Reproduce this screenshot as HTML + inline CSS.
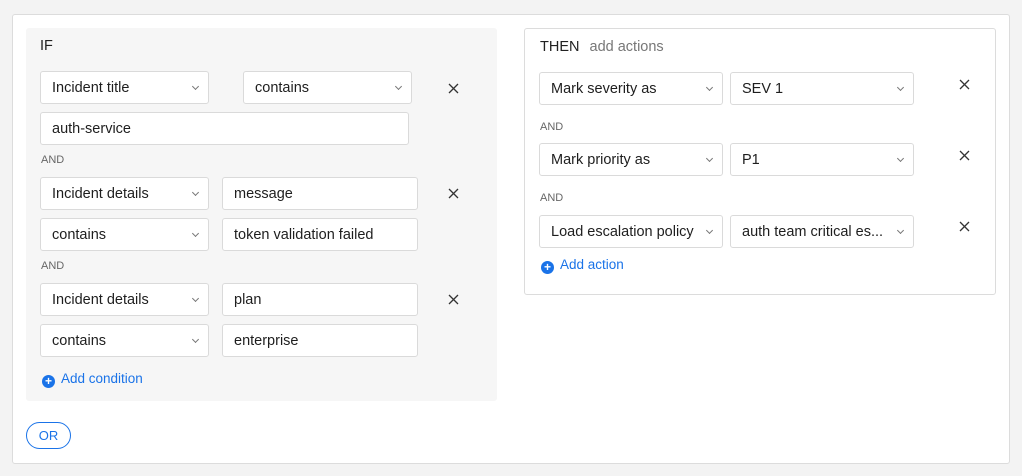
<!DOCTYPE html>
<html><head><style>
*{box-sizing:border-box;margin:0;padding:0}
body{width:1022px;height:476px;background:#f3f3f3;font-family:"Liberation Sans",sans-serif;color:#222;position:relative;overflow:hidden;font-size:14px}
.a{position:absolute}
.card{left:12px;top:14px;width:998px;height:450px;background:#fff;border:1px solid #dcdcdc;border-radius:3px}
.if{left:26px;top:28px;width:471px;height:373px;background:#f6f6f6;border-radius:3px}
.then{left:524px;top:28px;width:472px;height:267px;background:#fff;border:1px solid #dcdcdc;border-radius:3px}
.f{position:absolute;background:#fff;border:1px solid #dadada;border-radius:3px;height:33px;line-height:33px;padding-left:11px;font-size:14.5px;white-space:nowrap;overflow:hidden;color:#1e1e1e}
.s::after{content:"";position:absolute;right:10px;top:12px;width:4px;height:4px;border-right:1px solid #777;border-bottom:1px solid #777;transform:rotate(45deg)}
.and{font-size:11px;color:#666}
.x{width:11px;height:11px}
.add{color:#1a73e8;font-size:13.5px}
.pl{display:inline-block;width:13px;height:13px;border-radius:50%;background:#1a73e8;color:#fff;font-size:12px;line-height:13px;text-align:center;font-weight:bold;vertical-align:-2px;margin-right:6px}
</style></head><body>
<svg width="0" height="0" style="position:absolute"><defs><symbol id="x" viewBox="0 0 11 11"><path d="M1 1L10 10M10 1L1 10" stroke="#333" stroke-width="1.3" fill="none"/></symbol></defs></svg>
<div class="a card"></div>
<div class="a if"></div>
<div class="a then"></div>
<div class="a" style="left:40px;top:38px;font-size:14.5px">IF</div>
<div class="f s" style="left:40px;top:71px;width:169px">Incident title</div>
<div class="f s" style="left:243px;top:71px;width:169px">contains</div>
<svg class="a x" style="left:448px;top:83px"><use href="#x"/></svg>
<div class="f" style="left:40px;top:112px;width:369px">auth-service</div>
<div class="a and" style="left:41px;top:154px">AND</div>
<div class="f s" style="left:40px;top:177px;width:169px">Incident details</div>
<div class="f" style="left:222px;top:177px;width:196px">message</div>
<svg class="a x" style="left:448px;top:188px"><use href="#x"/></svg>
<div class="f s" style="left:40px;top:218px;width:169px">contains</div>
<div class="f" style="left:222px;top:218px;width:196px">token validation failed</div>
<div class="a and" style="left:41px;top:260px">AND</div>
<div class="f s" style="left:40px;top:283px;width:169px">Incident details</div>
<div class="f" style="left:222px;top:283px;width:196px">plan</div>
<svg class="a x" style="left:448px;top:294px"><use href="#x"/></svg>
<div class="f s" style="left:40px;top:324px;width:169px">contains</div>
<div class="f" style="left:222px;top:324px;width:196px">enterprise</div>
<div class="a add" style="left:42px;top:371px"><span class="pl">+</span>Add condition</div>
<div class="a" style="left:26px;top:422px;width:45px;height:27px;border:1px solid #1a73e8;border-radius:14px;color:#1a73e8;font-size:13px;text-align:center;line-height:25px">OR</div>

<div class="a" style="left:540px;top:39px;font-size:14.5px">THEN <span style="color:#777;margin-left:6px">add actions</span></div>
<div class="f s" style="left:539px;top:72px;width:184px">Mark severity as</div>
<div class="f s" style="left:730px;top:72px;width:184px">SEV 1</div>
<svg class="a x" style="left:959px;top:79px"><use href="#x"/></svg>
<div class="a and" style="left:540px;top:121px">AND</div>
<div class="f s" style="left:539px;top:143px;width:184px">Mark priority as</div>
<div class="f s" style="left:730px;top:143px;width:184px">P1</div>
<svg class="a x" style="left:959px;top:150px"><use href="#x"/></svg>
<div class="a and" style="left:540px;top:192px">AND</div>
<div class="f s" style="left:539px;top:215px;width:184px">Load escalation policy</div>
<div class="f s" style="left:730px;top:215px;width:184px">auth team critical es...</div>
<svg class="a x" style="left:959px;top:221px"><use href="#x"/></svg>
<div class="a add" style="left:541px;top:257px"><span class="pl">+</span>Add action</div>
</body></html>
